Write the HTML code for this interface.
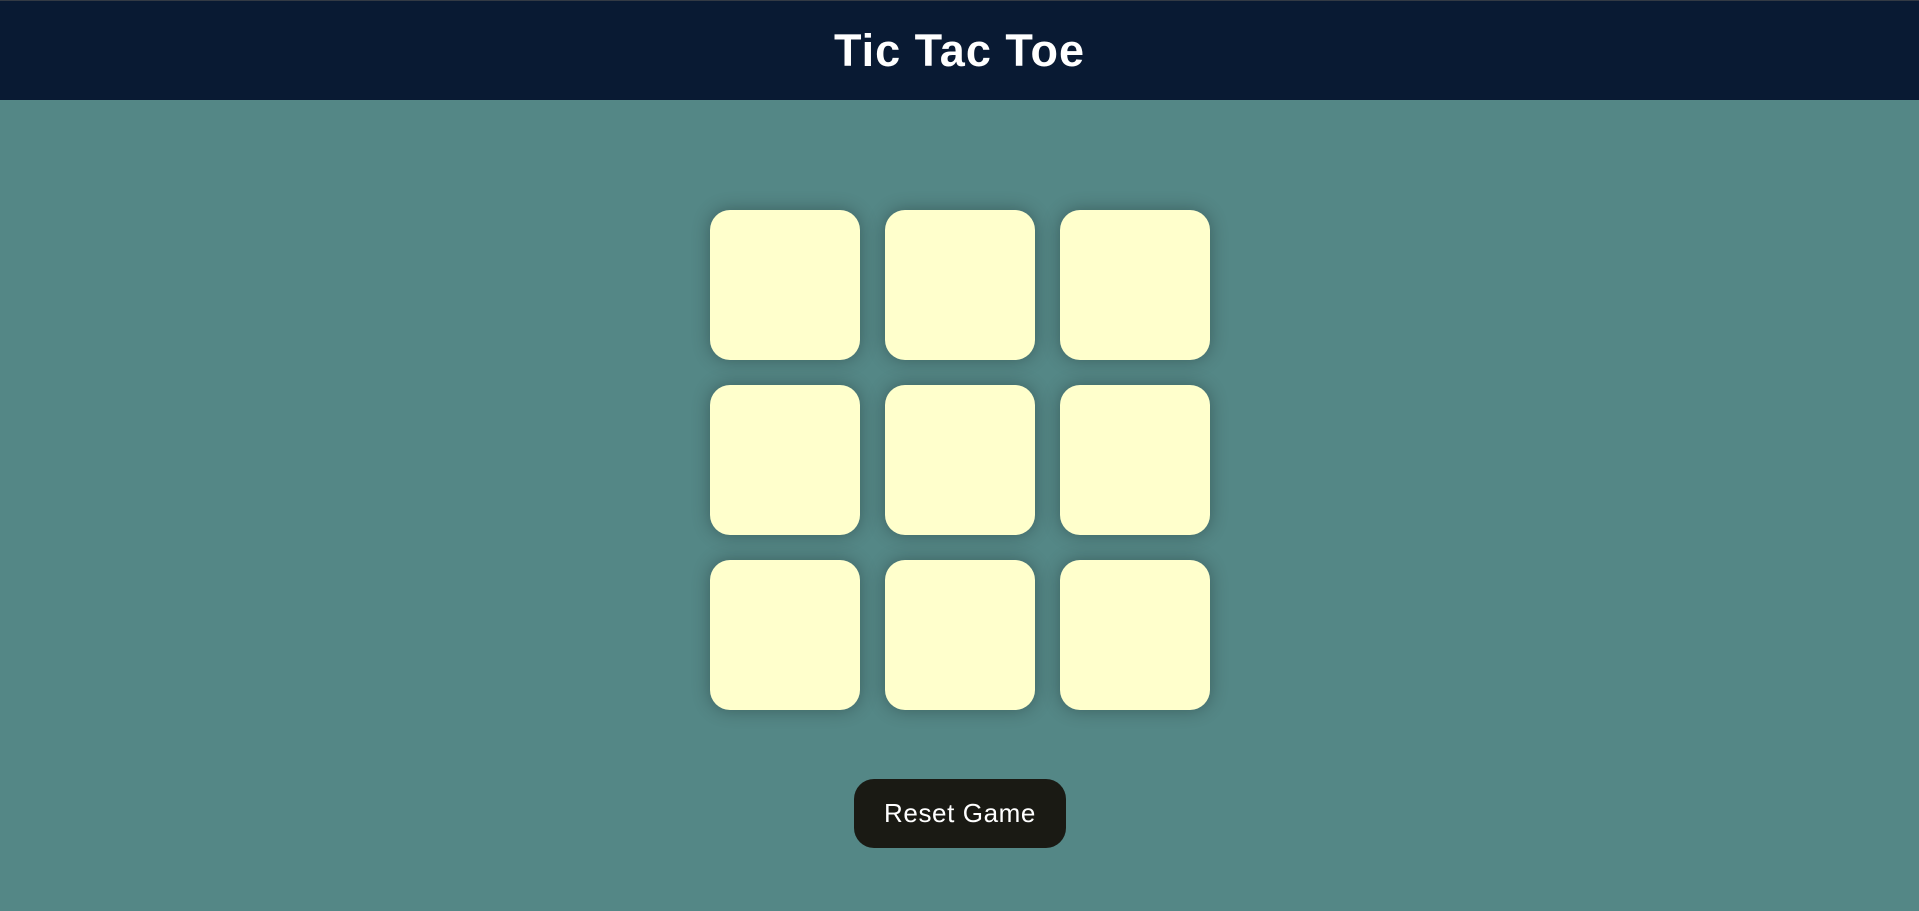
<!DOCTYPE html>
<html><head><style>
html,body{margin:0;padding:0;width:1919px;height:911px;overflow:hidden;background:#548786;font-family:"Liberation Sans",sans-serif}
.hdr{position:absolute;left:0;top:0;width:1919px;height:100px;background:#091a33;border-top:1px solid #333a44;box-sizing:border-box}
.hdr h1{margin:0;text-align:center;color:#fff;font-size:45px;font-weight:bold;line-height:100px;letter-spacing:1px}
.c{position:absolute;width:150px;height:150px;background:#ffffcc;border-radius:20px;box-shadow:0 0 18px rgba(0,0,0,0.3)}
.btn{position:absolute;left:854px;top:779px;width:212px;height:69px;background:#1a1a14;border-radius:20px;color:#fff;font-size:26px;text-align:center;line-height:69px;letter-spacing:0.6px}
</style></head><body>
<div class="hdr"><h1>Tic Tac Toe</h1></div>
<div class="c" style="left:710px;top:210px"></div>
<div class="c" style="left:885px;top:210px"></div>
<div class="c" style="left:1060px;top:210px"></div>
<div class="c" style="left:710px;top:385px"></div>
<div class="c" style="left:885px;top:385px"></div>
<div class="c" style="left:1060px;top:385px"></div>
<div class="c" style="left:710px;top:560px"></div>
<div class="c" style="left:885px;top:560px"></div>
<div class="c" style="left:1060px;top:560px"></div>
<div class="btn">Reset Game</div>
</body></html>
